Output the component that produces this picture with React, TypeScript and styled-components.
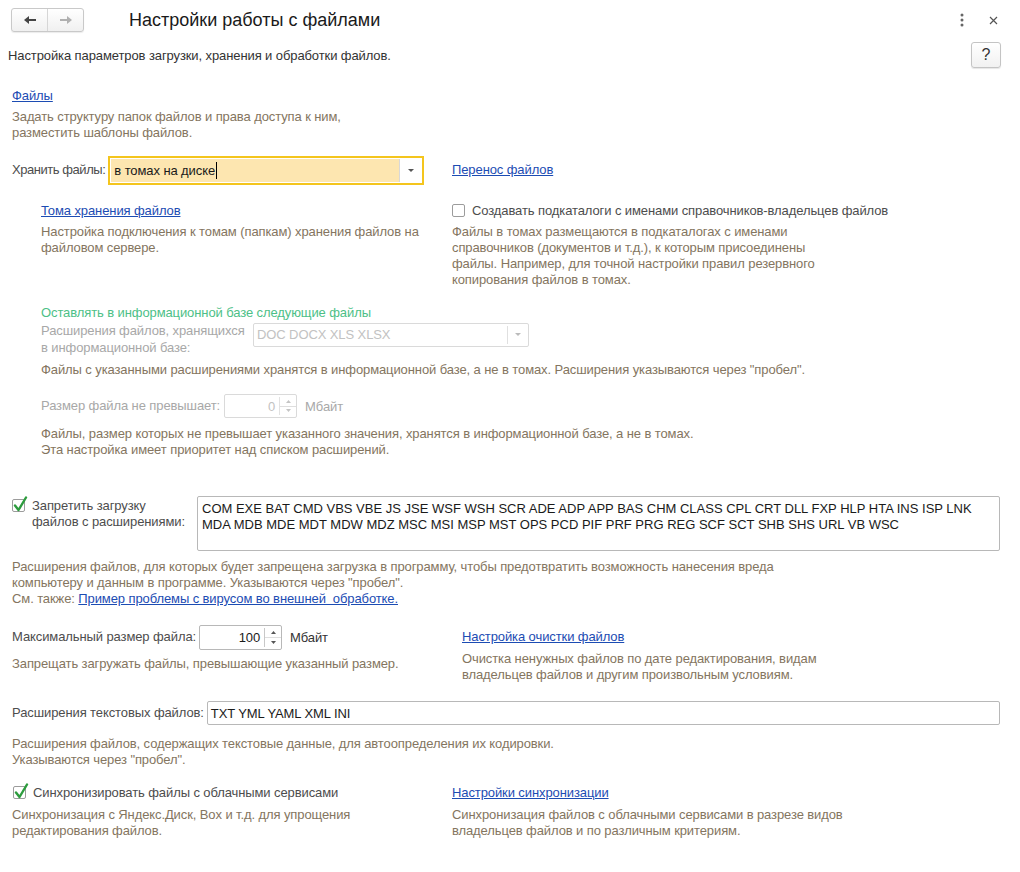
import React from 'react';
import styled, { createGlobalStyle } from 'styled-components';

const GlobalStyle = createGlobalStyle`
  html, body {
    margin: 0;
    padding: 0;
    background: #ffffff;
  }
  body {
    font-family: "Liberation Sans", Arial, sans-serif;
    font-size: 13px;
    letter-spacing: -0.1px;
    color: #4d4d4d;
  }
`;

const Page = styled.div`
  width: 1020px;
  height: 872px;
  box-sizing: border-box;
  overflow: hidden;
`;

const Header = styled.div`
  height: 40px;
  display: flex;
  align-items: center;
  padding: 0 17px 0 11px;
`;

const NavGroup = styled.div`
  display: flex;
  width: 73px;
  height: 24px;
  box-sizing: border-box;
  border: 1px solid #c9c9c9;
  border-radius: 3px;
  background: linear-gradient(#ffffff, #f0f0f0);
  box-shadow: 0 1px 1px rgba(0, 0, 0, 0.08);
`;

const NavButton = styled.div<{ $divider?: boolean }>`
  flex: 1;
  display: flex;
  align-items: center;
  justify-content: center;
  border-right: ${(p) => (p.$divider ? '1px solid #d6d6d6' : 'none')};
`;

const Title = styled.h1`
  margin: 0 0 0 45px;
  font-size: 18px;
  font-weight: normal;
  letter-spacing: 0;
  color: #1a1a1a;
  flex: 1;
`;

const HeaderIcon = styled.div`
  width: 20px;
  height: 20px;
  display: flex;
  align-items: center;
  justify-content: center;
  margin-left: 11px;
`;

const SubRow = styled.div`
  display: flex;
  align-items: center;
  justify-content: space-between;
  height: 26px;
  margin-top: 2px;
  padding: 0 19px 0 8px;
  color: #333;
`;

const HelpButton = styled.div`
  width: 30px;
  height: 26px;
  box-sizing: border-box;
  border: 1px solid #c4c4c4;
  border-radius: 3px;
  background: linear-gradient(#ffffff, #f1f1f1);
  box-shadow: 0 1px 1px rgba(0, 0, 0, 0.1);
  display: flex;
  align-items: center;
  justify-content: center;
  font-size: 16px;
  color: #333;
`;

const Body = styled.div`
  padding: 0 20px 0 12px;
`;

const Section = styled.div<{ $top: number; $indent?: number }>`
  margin-top: ${(p) => p.$top}px;
  padding-left: ${(p) => p.$indent || 0}px;
`;

const Link = styled.a`
  color: #1c4cb3;
  text-decoration: underline;
  line-height: 16px;
  display: inline-block;
  cursor: pointer;
`;

const Note = styled.div<{ $top?: number }>`
  color: #847560;
  line-height: 16.3px;
  margin-top: ${(p) => (p.$top === undefined ? 5 : p.$top)}px;
`;

const Row = styled.div`
  display: flex;
  align-items: center;
`;

const Label = styled.span<{ $muted?: boolean; $narrow?: boolean }>`
  color: ${(p) => (p.$muted ? '#a8a8a8' : '#4d4d4d')};
  line-height: 16px;
  margin-right: 3px;
  white-space: nowrap;
  letter-spacing: ${(p) => (p.$narrow ? '-0.45px' : '-0.1px')};
`;

const Columns = styled.div<{ $left: number; $top: number }>`
  display: grid;
  grid-template-columns: ${(p) => p.$left}px 1fr;
  margin-top: ${(p) => p.$top}px;
`;

const Col = styled.div<{ $indent?: number }>`
  padding-left: ${(p) => p.$indent || 0}px;
`;

const ComboActive = styled.div`
  width: 316px;
  height: 29px;
  box-sizing: border-box;
  border: 2px solid #f4c51d;
  display: flex;
  background: #ffffff;
`;

const ComboValue = styled.div`
  flex: 1;
  background: #fde6b0;
  margin: 1px 0 1px 1px;
  display: flex;
  align-items: center;
  padding-left: 3px;
  color: #1a1a1a;
  border-right: 1px solid #d8d8d8;
`;

const Caret = styled.span`
  display: inline-block;
  width: 1px;
  height: 17px;
  background: #000;
  margin-left: 1px;
`;

const DropButton = styled.div`
  width: 22px;
  display: flex;
  align-items: center;
  justify-content: center;
`;

const Arrow = styled.span<{ $muted?: boolean }>`
  width: 0;
  height: 0;
  border-left: 3px solid transparent;
  border-right: 3px solid transparent;
  border-top: 3px solid ${(p) => (p.$muted ? '#bbbbbb' : '#555555')};
`;

const Field = styled.div<{ $w: number; $h: number; $disabled?: boolean }>`
  width: ${(p) => p.$w}px;
  height: ${(p) => p.$h}px;
  box-sizing: border-box;
  border: 1px solid ${(p) => (p.$disabled ? '#dadada' : '#b8b8b8')};
  border-radius: 2px;
  display: flex;
  background: #fff;
  color: ${(p) => (p.$disabled ? '#c2c2c2' : '#1a1a1a')};
`;

const FieldText = styled.div<{ $right?: boolean }>`
  flex: 1;
  display: flex;
  align-items: center;
  justify-content: ${(p) => (p.$right ? 'flex-end' : 'flex-start')};
  padding: 0 4px 0 3px;
`;

const FieldButton = styled.div`
  width: 20px;
  border-left: 1px solid #e0e0e0;
  display: flex;
  align-items: center;
  justify-content: center;
  margin: 2px 0;
`;

const Spin = styled.div<{ $muted?: boolean }>`
  width: 16px;
  margin: 2px 0;
  border-left: 1px solid ${(p) => (p.$muted ? '#e2e2e2' : '#c8c8c8')};
  display: flex;
  flex-direction: column;
  color: ${(p) => (p.$muted ? '#c4c4c4' : '#555')};
`;

const SpinHalf = styled.div<{ $top?: boolean }>`
  flex: 1;
  display: flex;
  align-items: center;
  justify-content: center;
  border-bottom: ${(p) => (p.$top ? '1px solid #dedede' : 'none')};
`;

const Unit = styled.span<{ $muted?: boolean }>`
  margin-left: 8px;
  color: ${(p) => (p.$muted ? '#a8a8a8' : '#333')};
`;

const CheckWrap = styled.span`
  position: relative;
  width: 13px;
  height: 13px;
  box-sizing: border-box;
  border: 1px solid #9c9c9c;
  border-radius: 2px;
  background: #fff;
  flex: none;
  margin-right: 7px;
`;

const CheckMark = styled.svg`
  position: absolute;
  left: 0;
  top: -4px;
`;

const GreenHead = styled.div`
  color: #4dbf87;
  line-height: 16px;
`;

const Textarea = styled.div`
  flex: 1;
  height: 55px;
  box-sizing: border-box;
  border: 1px solid #b8b8b8;
  border-radius: 2px;
  padding: 4px 4px;
  line-height: 16px;
  color: #1a1a1a;
  letter-spacing: 0;
`;

const Check = ({ checked }: { checked?: boolean }) => (
  <CheckWrap>
    {checked && (
      <CheckMark width="16" height="17" viewBox="0 0 16 17">
        <path d="M2 9.5 L5.5 14 L13 1.5" fill="none" stroke="#2d9c3e" strokeWidth="2.4" strokeLinecap="round" strokeLinejoin="round" />
      </CheckMark>
    )}
  </CheckWrap>
);

const Spinner = ({ muted }: { muted?: boolean }) => (
  <Spin $muted={muted}>
    <SpinHalf $top>
      <svg width="5" height="3" viewBox="0 0 5 3"><path d="M0 3 L2.5 0 L5 3Z" fill="currentColor" /></svg>
    </SpinHalf>
    <SpinHalf>
      <svg width="5" height="3" viewBox="0 0 5 3"><path d="M0 0 L2.5 3 L5 0Z" fill="currentColor" /></svg>
    </SpinHalf>
  </Spin>
);

const App: React.FC = () => {
  return (
    <>
      <GlobalStyle />
      <Page>
        <Header>
          <NavGroup>
            <NavButton $divider>
              <svg width="14" height="10" viewBox="0 0 14 10">
                <path d="M1 5 L6 1 L6 4 L13 4 L13 6 L6 6 L6 9Z" fill="#444" />
              </svg>
            </NavButton>
            <NavButton>
              <svg width="14" height="10" viewBox="0 0 14 10">
                <path d="M13 5 L8 1 L8 4 L1 4 L1 6 L8 6 L8 9Z" fill="#b0b0b0" />
              </svg>
            </NavButton>
          </NavGroup>
          <Title>Настройки работы с файлами</Title>
          <HeaderIcon>
            <svg width="4" height="14" viewBox="0 0 4 14">
              <circle cx="2" cy="2" r="1.5" fill="#666" />
              <circle cx="2" cy="7" r="1.5" fill="#666" />
              <circle cx="2" cy="12" r="1.5" fill="#666" />
            </svg>
          </HeaderIcon>
          <HeaderIcon>
            <svg width="9" height="9" viewBox="0 0 9 9">
              <path d="M1 1 L8 8 M8 1 L1 8" stroke="#555" strokeWidth="1.2" />
            </svg>
          </HeaderIcon>
        </Header>

        <SubRow>
          <span>Настройка параметров загрузки, хранения и обработки файлов.</span>
          <HelpButton>?</HelpButton>
        </SubRow>

        <Body>
          <Section $top={20}>
            <Link>Файлы</Link>
            <Note>
              Задать структуру папок файлов и права доступа к ним,
              <br />
              разместить шаблоны файлов.
            </Note>
          </Section>

          <Columns $left={440} $top={14}>
            <Row>
              <Label $narrow>Хранить файлы:</Label>
              <ComboActive>
                <ComboValue>
                  в томах на диске
                  <Caret />
                </ComboValue>
                <DropButton>
                  <Arrow />
                </DropButton>
              </ComboActive>
            </Row>
            <Row>
              <Link>Перенос файлов</Link>
            </Row>
          </Columns>

          <Columns $left={440} $top={18}>
            <Col $indent={29}>
              <Link>Тома хранения файлов</Link>
              <Note>
                Настройка подключения к томам (папкам) хранения файлов на
                <br />
                файловом сервере.
              </Note>
            </Col>
            <Col>
              <Row>
                <Check />
                <Label>Создавать подкаталоги с именами справочников-владельцев файлов</Label>
              </Row>
              <Note>
                Файлы в томах размещаются в подкаталогах с именами
                <br />
                справочников (документов и т.д.), к которым присоединены
                <br />
                файлы. Например, для точной настройки правил резервного
                <br />
                копирования файлов в томах.
              </Note>
            </Col>
          </Columns>

          <Section $top={16} $indent={29}>
            <GreenHead>Оставлять в информационной базе следующие файлы</GreenHead>
            <Row style={{ marginTop: 2, alignItems: 'flex-start' }}>
              <Label $muted style={{ width: 208, marginRight: 4, lineHeight: '17px', marginTop: -1 }}>
                Расширения файлов, хранящихся
                <br />
                в информационной базе:
              </Label>
              <Field $w={276} $h={24} $disabled>
                <FieldText>DOC DOCX XLS XLSX</FieldText>
                <FieldButton>
                  <Arrow $muted />
                </FieldButton>
              </Field>
            </Row>
            <Note $top={6}>
              Файлы с указанными расширениями хранятся в информационной базе, а не в томах. Расширения указываются через "пробел".
            </Note>
            <Row style={{ marginTop: 16 }}>
              <Label $muted style={{ marginRight: 4 }}>Размер файла не превышает:</Label>
              <Field $w={73} $h={24} $disabled>
                <FieldText $right>0</FieldText>
                <Spinner muted />
              </Field>
              <Unit $muted>Мбайт</Unit>
            </Row>
            <Note $top={8}>
              Файлы, размер которых не превышает указанного значения, хранятся в информационной базе, а не в томах.
              <br />
              Эта настройка имеет приоритет над списком расширений.
            </Note>
          </Section>

          <Section $top={37}>
            <Row style={{ alignItems: 'flex-start' }}>
              <Row style={{ width: 185, alignItems: 'flex-start', paddingTop: 3 }}>
                <Check checked />
                <Label style={{ lineHeight: '16px', marginTop: -1 }}>
                  Запретить загрузку
                  <br />
                  файлов с расширениями:
                </Label>
              </Row>
              <Textarea>
                COM EXE BAT CMD VBS VBE JS JSE WSF WSH SCR ADE ADP APP BAS CHM CLASS CPL CRT DLL FXP HLP HTA INS ISP LNK MDA MDB MDE MDT MDW MDZ MSC MSI MSP MST OPS PCD PIF PRF PRG REG SCF SCT SHB SHS URL VB WSC
              </Textarea>
            </Row>
            <Note $top={8}>
              Расширения файлов, для которых будет запрещена загрузка в программу, чтобы предотвратить возможность нанесения вреда
              <br />
              компьютеру и данным в программе. Указываются через "пробел".
              <br />
              См. также: <Link>Пример проблемы с вирусом во внешней&nbsp; обработке.</Link>
            </Note>
          </Section>

          <Columns $left={450} $top={17}>
            <Col>
              <Row>
                <Label style={{ marginRight: 3 }}>Максимальный размер файла:</Label>
                <Field $w={83} $h={25}>
                  <FieldText $right>100</FieldText>
                  <Spinner />
                </Field>
                <Unit>Мбайт</Unit>
              </Row>
              <Note $top={6}>Запрещать загружать файлы, превышающие указанный размер.</Note>
            </Col>
            <Col style={{ paddingTop: 4 }}>
              <Link>Настройка очистки файлов</Link>
              <Note $top={6}>
                Очистка ненужных файлов по дате редактирования, видам
                <br />
                владельцев файлов и другим произвольным условиям.
              </Note>
            </Col>
          </Columns>

          <Section $top={18}>
            <Row>
              <Label style={{ marginRight: 3 }}>Расширения текстовых файлов:</Label>
              <Field $w={793} $h={24}>
                <FieldText>TXT YML YAML XML INI</FieldText>
              </Field>
            </Row>
            <Note $top={11}>
              Расширения файлов, содержащих текстовые данные, для автоопределения их кодировки.
              <br />
              Указываются через "пробел".
            </Note>
          </Section>

          <Columns $left={440} $top={16}>
            <Col>
              <Row style={{ paddingLeft: 1 }}>
                <Check checked />
                <Label>Синхронизировать файлы с облачными сервисами</Label>
              </Row>
              <Note $top={6}>
                Синхронизация с Яндекс.Диск, Box и т.д. для упрощения
                <br />
                редактирования файлов.
              </Note>
            </Col>
            <Col>
              <Link>Настройки синхронизации</Link>
              <Note $top={6}>
                Синхронизация файлов с облачными сервисами в разрезе видов
                <br />
                владельцев файлов и по различным критериям.
              </Note>
            </Col>
          </Columns>
        </Body>
      </Page>
    </>
  );
};

export default App;
